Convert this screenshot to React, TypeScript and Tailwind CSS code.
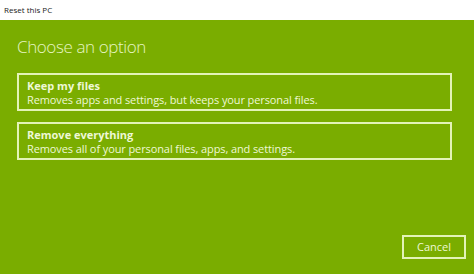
import React from "react";

interface OptionProps {
  title: string;
  description: string;
}

const OptionCard: React.FC<OptionProps> = ({ title, description }) => (
  <div className="w-[435px] h-[38px] border-2 border-[#e3f3b8] px-[8px] pt-[4px] flex flex-col leading-[14px] text-[#eef8d6] cursor-pointer">
    <span className="text-[11px] font-bold">{title}</span>
    <span className="text-[11px] tracking-[-0.1px]">{description}</span>
  </div>
);

export default function App() {
  const options: OptionProps[] = [
    {
      title: "Keep my files",
      description: "Removes apps and settings, but keeps your personal files.",
    },
    {
      title: "Remove everything",
      description: "Removes all of your personal files, apps, and settings.",
    },
  ];

  return (
    <div
      className="w-[474px] h-[274px] flex flex-col"
      style={{ fontFamily: '"Open Sans", "Noto Sans", sans-serif' }}
    >
      {/* Title bar */}
      <div className="h-[20px] bg-white flex items-center px-[4px]">
        <span className="text-[8px] text-[#222]">Reset this PC</span>
      </div>

      {/* Content */}
      <div className="flex-1 bg-[#7aad00] flex flex-col px-[17px]">
        <h1 className="mt-[15px] text-[17px] leading-[24px] tracking-[-0.4px] text-[#e6f5c2] font-light">
          Choose an option
        </h1>
        <div className="mt-[14px] flex flex-col gap-[11px]">
          {options.map((o, i) => (
            <OptionCard key={i} title={o.title} description={o.description} />
          ))}
        </div>
        <div className="mt-auto mb-[15px] flex justify-end">
          <button className="w-[64px] h-[24px] border-2 border-[#e3f3b8] text-[11px] text-[#eef8d6] mr-[-9px]">
            Cancel
          </button>
        </div>
      </div>
    </div>
  );
}
